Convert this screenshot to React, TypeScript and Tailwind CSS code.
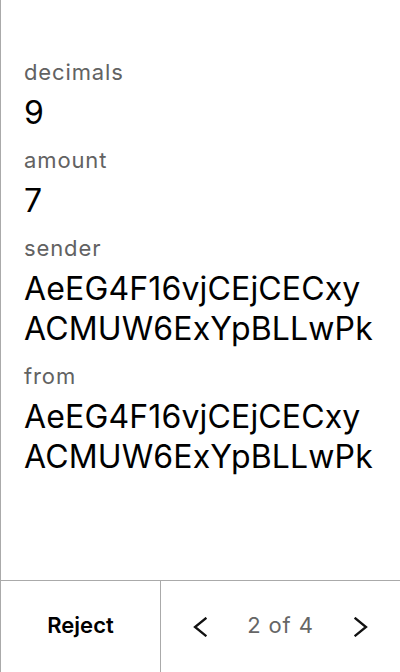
const fields = [
  { label: 'decimals', value: ['9'] },
  { label: 'amount', value: ['7'] },
  { label: 'sender', value: ['AeEG4F16vjCEjCECxy', 'ACMUW6ExYpBLLwPk'] },
  { label: 'from', value: ['AeEG4F16vjCEjCECxy', 'ACMUW6ExYpBLLwPk'] },
]

function Chevron({ dir }: { dir: 'left' | 'right' }) {
  return (
    <svg width="14" height="20" viewBox="0 0 14 20" fill="none" stroke="#111" strokeWidth="2.3" strokeLinecap="square">
      {dir === 'left' ? <path d="M12.5 1.5 L2 10 L12.5 18.5" /> : <path d="M1.5 1.5 L12 10 L1.5 18.5" />}
    </svg>
  )
}

export default function App() {
  return (
    <div className="flex h-[672px] w-[400px] flex-col border-l border-[#aaaaaa] bg-white font-['Inter','Liberation_Sans',sans-serif] text-black">
      <div className="flex-1 pl-[23px] pr-4 pt-[58px]">
        {fields.map((f, i) => (
          <div key={f.label} className={i > 0 ? 'mt-[13px]' : ''}>
            <div className="text-[22px] leading-[28px] tracking-[0.04em] text-[#626262]">{f.label}</div>
            <div className="mt-[7px] text-[32px] leading-[40px] tracking-[0.15px]">
              {f.value.map((line) => (
                <div key={line}>{line}</div>
              ))}
            </div>
          </div>
        ))}
      </div>

      <div className="flex h-[92px] border-t border-[#aaaaaa]">
        <button className="flex w-[160px] items-center justify-center border-r border-[#aaaaaa] pb-0.5 text-[22px] font-semibold">
          Reject
        </button>
        <div className="flex flex-1 items-center justify-between px-[32px]">
          <Chevron dir="left" />
          <span className="pb-0.5 text-[22px] tracking-[0.04em] text-[#666666]">2 of 4</span>
          <Chevron dir="right" />
        </div>
      </div>
    </div>
  )
}
